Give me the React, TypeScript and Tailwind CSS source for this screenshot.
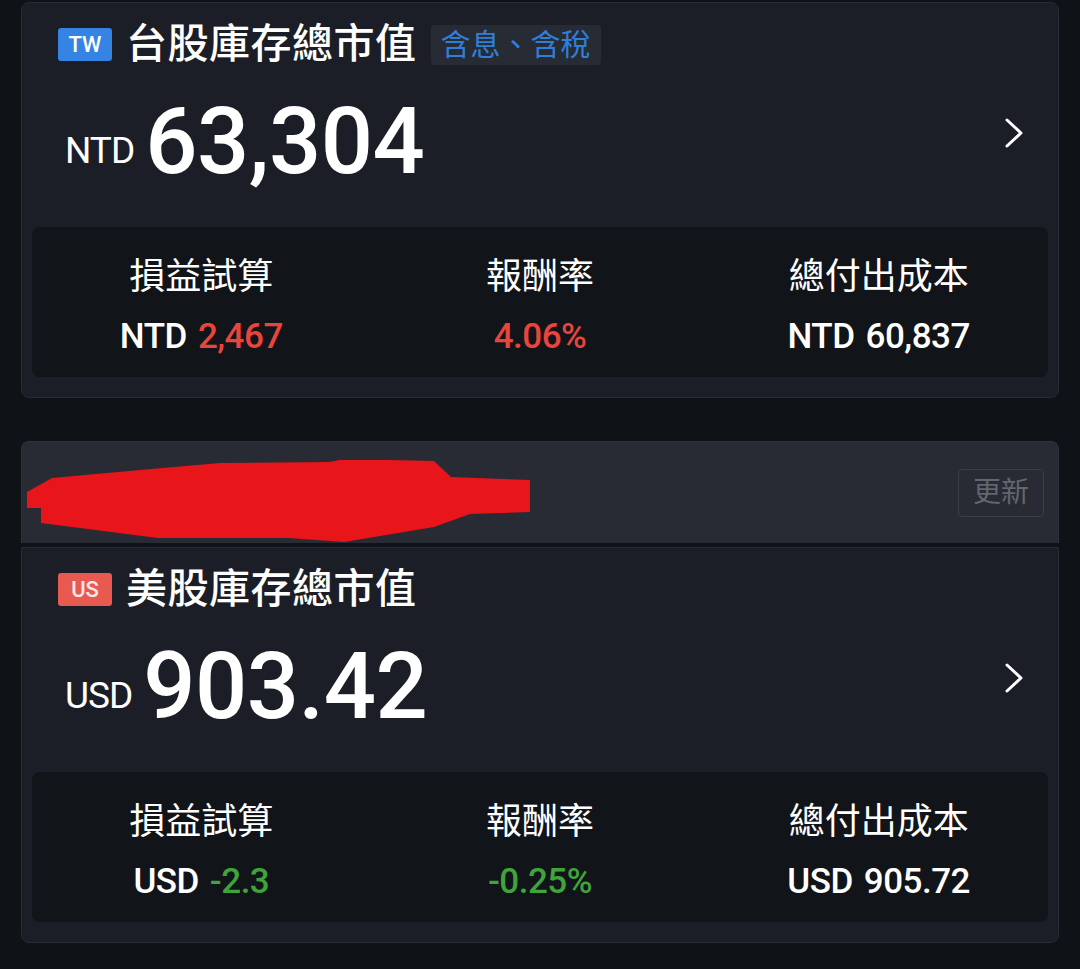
import React from 'react';

type Stat = { label: string; unit?: string; value: string; color: string };

const RED = 'text-[#e8453c]';
const GREEN = 'text-[#3fa43a]';

function Chevron() {
  return (
    <svg width="20" height="32" viewBox="0 0 20 32" className="mt-[21px] shrink-0">
      <polyline points="3,3 17,16 3,29" fill="none" stroke="#fff" strokeWidth="3" strokeLinecap="round" strokeLinejoin="round" />
    </svg>
  );
}

function Holding({
  badge,
  badgeClass,
  title,
  tag,
  currency,
  total,
  stats,
  className = '',
}: {
  badge: string;
  badgeClass: string;
  title: string;
  tag?: string;
  currency: string;
  total: string;
  stats: Stat[];
  className?: string;
}) {
  return (
    <div className={`border border-[#272b34] bg-[#1b1e26] pt-[25px] pb-[20px] ${className}`}>
      <div className="flex h-[33px] items-center pl-[36px]">
        <div className={`flex h-[33px] w-[54px] items-center justify-center rounded-[3px] text-[22px] font-medium ${badgeClass}`}>
          {badge}
        </div>
        <div className="ml-[14px] text-[41px] leading-none font-medium tracking-[0.5px] text-white">{title}</div>
        {tag && (
          <div className="ml-[14px] flex h-[40px] items-center rounded-[4px] bg-[#272b33] px-[10px] text-[30px] leading-none text-[#2f7fd8]">
            {tag}
          </div>
        )}
      </div>

      <div className="mt-[35px] flex items-start justify-between pl-[43px] pr-[34px]">
        <div className="flex items-end">
          <span className="mb-[19px] text-[37px] leading-none tracking-[-1px] text-white">{currency}</span>
          <span className="ml-[11px] text-[92px] leading-none font-medium tracking-[-0.5px] text-white">{total}</span>
        </div>
        <Chevron />
      </div>

      <div className="mx-[10px] mt-[39px] grid h-[150px] grid-cols-3 rounded-lg bg-[#111419]">
        {stats.map(s => (
          <div key={s.label} className="flex flex-col items-center pt-[32px]">
            <div className="text-[36px] leading-none text-white">{s.label}</div>
            <div className="mt-[24px] flex items-baseline text-[35px] leading-none font-medium tracking-[-0.5px]">
              {s.unit && <span className="mr-[11px] text-white">{s.unit}</span>}
              <span className={s.color}>{s.value}</span>
            </div>
          </div>
        ))}
      </div>
    </div>
  );
}

export default function App() {
  return (
    <div className="min-h-screen w-[1080px] bg-[#0f1217] pt-[2px] font-['Roboto','Noto_Sans_CJK_TC',sans-serif]">
      <div className="mx-[21px]">
        <Holding
          className="rounded-lg"
          badge="TW"
          badgeClass="bg-[#3584e4] text-white"
          title="台股庫存總市值"
          tag="含息、含稅"
          currency="NTD"
          total="63,304"
          stats={[
            { label: '損益試算', unit: 'NTD', value: '2,467', color: RED },
            { label: '報酬率', value: '4.06%', color: RED },
            { label: '總付出成本', unit: 'NTD', value: '60,837', color: 'text-white' },
          ]}
        />

        <div className="mt-[43px] flex h-[102px] items-center justify-between rounded-t-lg border border-b-0 border-[#2e323c] bg-[#282b34] pl-[5px] pr-[14px]">
          <svg width="504" height="83" viewBox="27 460 504 83" className="self-end">
            <path
              d="M27 492 L52 478 L140 470 L220 463 L330 462 L344 459 L434 461 L451 477 L530 480 L530 512 L470 514 L434 527 L344 542 L289 538 L158 538 L41 523 L41 508 L27 508 Z"
              fill="#e8151a"
            />
          </svg>
          <div className="flex h-[48px] w-[86px] items-center justify-center rounded-[4px] border border-[#3a3e48] text-[28px] leading-none text-[#62666f]">
            更新
          </div>
        </div>
        <div className="h-[4px]" />
        <Holding
          className="rounded-b-lg"
          badge="US"
          badgeClass="bg-[#e85a50] text-[#fde8e6]"
          title="美股庫存總市值"
          currency="USD"
          total="903.42"
          stats={[
            { label: '損益試算', unit: 'USD', value: '-2.3', color: GREEN },
            { label: '報酬率', value: '-0.25%', color: GREEN },
            { label: '總付出成本', unit: 'USD', value: '905.72', color: 'text-white' },
          ]}
        />
      </div>
    </div>
  );
}
